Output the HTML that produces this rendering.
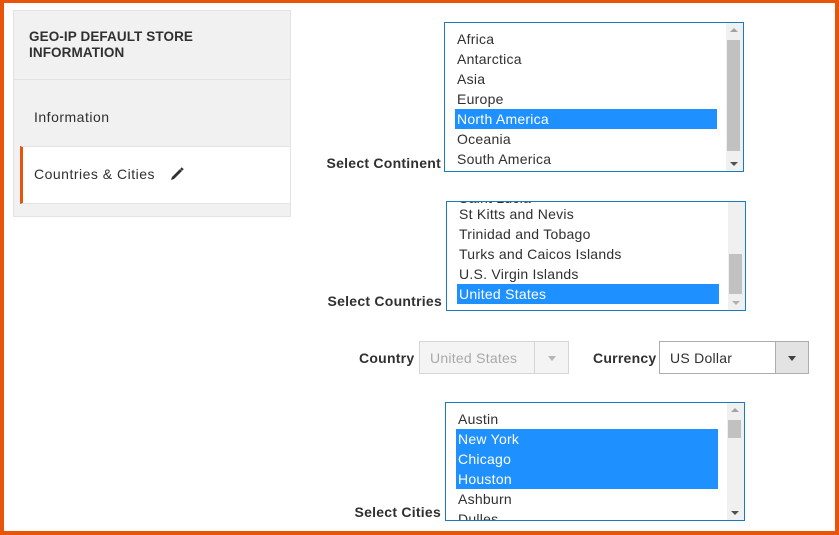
<!DOCTYPE html>
<html><head><meta charset="utf-8"><style>
*{margin:0;padding:0;box-sizing:border-box}
body{width:839px;height:535px;overflow:hidden;background:#fff;font-family:"Liberation Sans",sans-serif;font-size:14px;color:#303030;position:relative;letter-spacing:0.25px}
.frame{position:absolute;left:0;top:0;width:839px;height:535px;border:solid #e8540a;border-width:3px 4px 4px 4px;z-index:10;pointer-events:none}
.a{position:absolute}
.lbl{position:absolute;font-weight:bold;font-size:14px;color:#303030;text-align:right;white-space:nowrap}
.box{position:absolute;border:1px solid #1979c3;background:#fff;overflow:hidden}
.row{position:absolute;height:20px;line-height:20px;font-size:14px;color:#303030;white-space:nowrap;padding-left:2px}
.sel{background:#1e90ff;color:#fff}
.sb{position:absolute;top:0;right:0;width:17px;bottom:0;background:#f0f0f0}
.th{position:absolute;left:1px;width:13px;background:#c1c1c1}
.up{position:absolute;left:4px;top:5px;width:0;height:0;border-left:4px solid transparent;border-right:4px solid transparent;border-bottom:4px solid #a3a3a3}
.dn{position:absolute;left:4px;bottom:5px;width:0;height:0;border-left:4px solid transparent;border-right:4px solid transparent;border-top:4px solid #505050}
</style></head><body>
<div class="frame"></div>

<div class="a" style="left:13px;top:10px;width:278px;height:207px;background:#f1f1f1;border:1px solid #e3e3e3"></div>
<div class="a" style="left:14px;top:79px;width:276px;height:1px;background:#e3e3e3"></div>
<div class="a" style="left:29px;top:29px;font-weight:bold;font-size:13.5px;line-height:16px;color:#303030;letter-spacing:0.1px">GEO-IP DEFAULT STORE<br>INFORMATION</div>
<div class="a" style="left:34px;top:109px;font-size:14px;color:#303030;letter-spacing:0.5px">Information</div>
<div class="a" style="left:20px;top:146px;width:270px;height:58px;background:#fff;border-top:1px solid #e3e3e3;border-bottom:1px solid #e3e3e3;border-left:3px solid #e8540a"></div>
<div class="a" style="left:34px;top:166px;font-size:14px;color:#303030;letter-spacing:0.5px">Countries &amp; Cities</div>
<svg class="a" style="left:169px;top:166px" width="16" height="16" viewBox="0 0 16 16"><path d="M2 14 L3 11 L11 3 L13 5 L5 13 Z" fill="#303030"/><path d="M12 2 L14 4" stroke="#303030" stroke-width="2"/></svg>

<div class="lbl" style="right:398px;top:155px">Select Continent</div>
<div class="box" style="left:444px;top:22px;width:300px;height:150px">
 <div class="row" style="left:10px;top:6px">Africa</div>
 <div class="row" style="left:10px;top:26px">Antarctica</div>
 <div class="row" style="left:10px;top:46px">Asia</div>
 <div class="row" style="left:10px;top:66px">Europe</div>
 <div class="row sel" style="left:10px;top:86px;width:262px">North America</div>
 <div class="row" style="left:10px;top:106px">Oceania</div>
 <div class="row" style="left:10px;top:126px">South America</div>
 <div class="sb"><div class="up"></div><div class="th" style="top:17px;height:111px"></div><div class="dn"></div></div>
</div>

<div class="lbl" style="right:397px;top:293px">Select Countries</div>
<div class="box" style="left:446px;top:201px;width:300px;height:110px">
 <div class="row" style="left:10px;top:-14px">Saint Lucia</div>
 <div class="row" style="left:10px;top:2px">St Kitts and Nevis</div>
 <div class="row" style="left:10px;top:22px">Trinidad and Tobago</div>
 <div class="row" style="left:10px;top:42px">Turks and Caicos Islands</div>
 <div class="row" style="left:10px;top:62px">U.S. Virgin Islands</div>
 <div class="row sel" style="left:10px;top:82px;width:262px">United States</div>
 <div class="sb"><div class="th" style="top:52px;height:40px"></div><div class="dn" style="border-top-color:#b0b0b0"></div></div>
</div>

<div class="lbl" style="left:359px;top:350px">Country</div>
<div class="a" style="left:419px;top:341px;width:150px;height:33px;background:#f4f4f4;border:1px solid #d6d6d6"></div>
<div class="a" style="left:534px;top:342px;width:1px;height:31px;background:#d6d6d6"></div>
<div class="a" style="left:430px;top:350px;color:#a9a9a9">United States</div>
<div class="a" style="left:548px;top:356px;border-left:4px solid transparent;border-right:4px solid transparent;border-top:5px solid #b5b5b5"></div>

<div class="lbl" style="left:593px;top:350px">Currency</div>
<div class="a" style="left:659px;top:341px;width:150px;height:33px;background:#fff;border:1px solid #adadad"></div>
<div class="a" style="left:775px;top:342px;width:33px;height:31px;background:#e3e3e3;border-left:1px solid #adadad"></div>
<div class="a" style="left:670px;top:350px;color:#303030">US Dollar</div>
<div class="a" style="left:788px;top:356px;border-left:4px solid transparent;border-right:4px solid transparent;border-top:5px solid #404040"></div>

<div class="lbl" style="right:398px;top:504px">Select Cities</div>
<div class="box" style="left:445px;top:402px;width:300px;height:119px">
 <div class="row" style="left:10px;top:6px">Austin</div>
 <div class="row sel" style="left:10px;top:26px;width:262px">New York</div>
 <div class="row sel" style="left:10px;top:46px;width:262px">Chicago</div>
 <div class="row sel" style="left:10px;top:66px;width:262px">Houston</div>
 <div class="row" style="left:10px;top:86px">Ashburn</div>
 <div class="row" style="left:10px;top:106px">Dulles</div>
 <div class="sb"><div class="up"></div><div class="th" style="top:17px;height:18px"></div><div class="dn"></div></div>
</div>
</body></html>
